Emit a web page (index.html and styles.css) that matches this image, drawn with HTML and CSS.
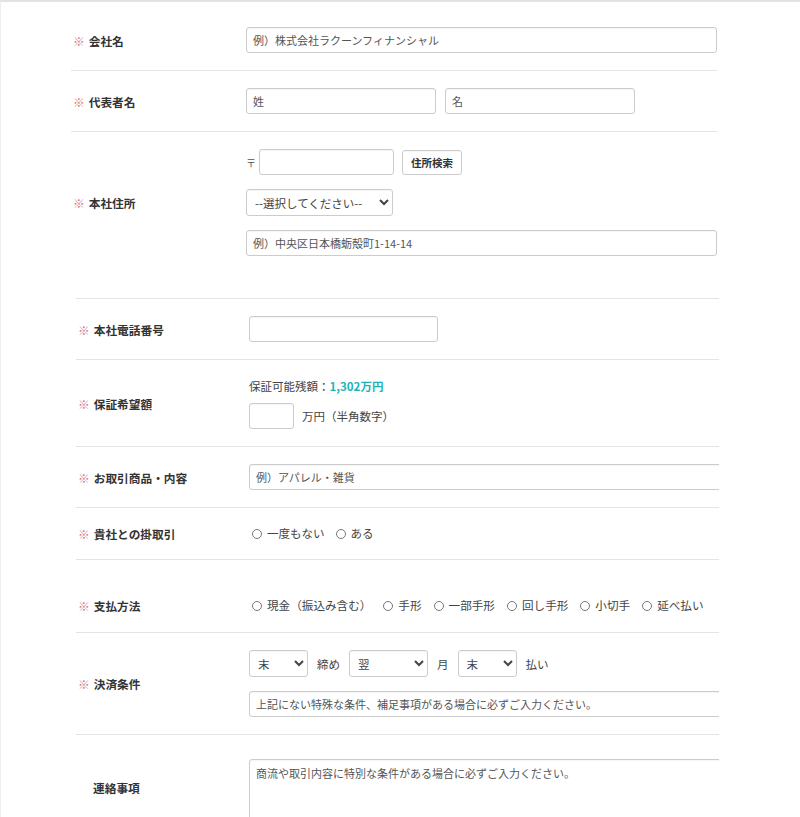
FILE: index.html
```html
<!DOCTYPE html>
<html lang="ja">
<head>
  <meta charset="UTF-8" />
  <meta name="viewport" content="width=device-width, initial-scale=1.0" />
  <title>お申し込みフォーム</title>
  <link rel="stylesheet" href="styles.css">
</head>
<body>
  <div class="page">

    <div class="form-block company">
      <div class="row">
        <div class="label"><span class="req">※</span>会社名</div>
        <div class="field">
          <input type="text" class="text full" placeholder="例）株式会社ラクーンフィナンシャル">
        </div>
      </div>

      <div class="row">
        <div class="label"><span class="req">※</span>代表者名</div>
        <div class="field inline">
          <input type="text" class="text name" placeholder="姓">
          <input type="text" class="text name" placeholder="名">
        </div>
      </div>

      <div class="row last">
        <div class="label"><span class="req">※</span>本社住所</div>
        <div class="field stack">
          <div class="inline zip-line">
            <span class="zip-mark">〒</span>
            <input type="text" class="text zip">
            <button type="button" class="search-btn">住所検索</button>
          </div>
          <div>
            <select class="pref">
              <option>--選択してください--</option>
            </select>
          </div>
          <input type="text" class="text full" placeholder="例）中央区日本橋蛎殻町1-14-14">
        </div>
      </div>
    </div>

    <div class="form-block detail">
      <div class="row">
        <div class="label"><span class="req">※</span>本社電話番号</div>
        <div class="field">
          <input type="text" class="text phone">
        </div>
      </div>

      <div class="row">
        <div class="label"><span class="req">※</span>保証希望額</div>
        <div class="field stack tight">
          <div class="note">保証可能残額：<strong class="amount">1,302万円</strong></div>
          <div class="inline">
            <input type="text" class="text amount-input">
            <span class="unit">万円（半角数字）</span>
          </div>
        </div>
      </div>

      <div class="row">
        <div class="label"><span class="req">※</span>お取引商品・内容</div>
        <div class="field">
          <input type="text" class="text wide" placeholder="例）アパレル・雑貨">
        </div>
      </div>

      <div class="row">
        <div class="label"><span class="req">※</span>貴社との掛取引</div>
        <div class="field radios">
          <label><input type="radio" name="history">一度もない</label>
          <label><input type="radio" name="history">ある</label>
        </div>
      </div>

      <div class="row pay">
        <div class="label"><span class="req">※</span>支払方法</div>
        <div class="field radios spaced">
          <label><input type="radio" name="method">現金（振込み含む）</label>
          <label><input type="radio" name="method">手形</label>
          <label><input type="radio" name="method">一部手形</label>
          <label><input type="radio" name="method">回し手形</label>
          <label><input type="radio" name="method">小切手</label>
          <label><input type="radio" name="method">延べ払い</label>
        </div>
      </div>

      <div class="row">
        <div class="label"><span class="req">※</span>決済条件</div>
        <div class="field stack">
          <div class="inline terms">
            <select class="short"><option>末</option></select>
            <span class="unit">締め</span>
            <select class="mid"><option>翌</option></select>
            <span class="unit">月</span>
            <select class="short"><option>末</option></select>
            <span class="unit">払い</span>
          </div>
          <input type="text" class="text wide" placeholder="上記にない特殊な条件、補足事項がある場合に必ずご入力ください。">
        </div>
      </div>

      <div class="row notes">
        <div class="label optional">連絡事項</div>
        <div class="field">
          <textarea class="memo" placeholder="商流や取引内容に特別な条件がある場合に必ずご入力ください。"></textarea>
        </div>
      </div>
    </div>

  </div>
</body>
</html>
```

FILE: styles.css
```css
body {
  margin: 0;
  padding: 0;
  background: #ffffff;
  font-family: "Noto Sans CJK JP", "Noto Sans", sans-serif;
  color: #444444;
}
.page {
  border-top: 2px solid #e2e2e2;
  border-left: 1px solid #eeeeee;
  min-height: 815px;
  padding-top: 8px;
  box-sizing: border-box;
}
.form-block.company {
  margin-left: 70px;
  width: 646px;
}
.form-block.detail {
  margin-left: 75px;
  width: 643px;
  border-top: 1px solid #e4e4e4;
  overflow: hidden;
}
.row {
  display: flex;
  align-items: center;
  padding: 17px 0;
  border-bottom: 1px solid #e4e4e4;
}
.row.last {
  border-bottom: none;
  padding-bottom: 42px;
}
.row.pay {
  padding-top: 37px;
  padding-bottom: 18px;
}
.row.notes {
  padding-top: 24px;
  align-items: flex-start;
}
.label {
  flex: 0 0 auto;
  width: 173px;
  padding-left: 2px;
  font-size: 11.7px;
  font-weight: bold;
  color: #333333;
  box-sizing: border-box;
}
.company .label {
  width: 175px;
}
.notes .label {
  padding-left: 17px;
  padding-top: 20px;
}
.req {
  color: #d47676;
  font-weight: normal;
  margin-right: 4px;
}
.field {
  flex: 1;
  min-width: 0;
  font-size: 11.5px;
}
.inline {
  display: flex;
  align-items: center;
}
.stack {
  display: flex;
  flex-direction: column;
  gap: 14px;
}
.stack.tight {
  gap: 8px;
}
.text, select, textarea, .search-btn {
  box-sizing: border-box;
  height: 26px;
  border: 1px solid #cccccc;
  border-radius: 3px;
  background: #ffffff;
  font-family: "Noto Sans CJK JP", "Noto Sans", sans-serif;
  font-size: 11px;
  color: #555555;
  box-shadow: inset 0 1px 1px rgba(0,0,0,0.04);
}
.text {
  padding: 0 6px;
  display: block;
}
.text::placeholder, textarea::placeholder {
  color: #555555;
  opacity: 1;
}
.full {
  width: 100%;
}
.wide {
  width: 520px;
}
.name {
  width: 190px;
  margin-right: 9px;
}
.zip-mark {
  font-size: 10px;
  color: #555555;
  margin-right: 3px;
}
.zip {
  width: 135px;
}
.search-btn {
  margin-left: 8px;
  width: 60px;
  height: 25px;
  padding: 0;
  font-weight: bold;
  color: #333333;
  font-size: 10.5px;
  cursor: pointer;
}
select {
  padding: 0 4px;
  font-size: 11.5px;
  color: #444444;
  height: 27px;
}
.pref {
  width: 147px;
}
.phone {
  width: 189px;
}
.note {
  color: #444444;
  line-height: 18px;
}
.amount {
  color: #1cb4b8;
}
.amount-input {
  width: 45px;
}
.unit {
  margin-left: 8px;
  color: #444444;
}
.terms .unit {
  margin: 0 9px;
}
.terms select.short {
  width: 59px;
}
.terms select.mid {
  width: 79px;
}
.radios {
  display: flex;
  align-items: center;
  line-height: 17px;
  color: #444444;
  padding-left: 3px;
  white-space: nowrap;
}
.radios label {
  display: flex;
  align-items: center;
  flex-shrink: 0;
  margin-right: 11px;
}
.radios.spaced label {
  margin-right: 12px;
  font-size: 11.6px;
}
.radios input {
  appearance: none;
  -webkit-appearance: none;
  flex-shrink: 0;
  width: 10px;
  height: 10px;
  margin: 0 5px 0 0;
  border: 1px solid #777777;
  border-radius: 50%;
  background: #ffffff;
}
.memo {
  width: 520px;
  height: 82px;
  padding: 5px 6px;
  resize: vertical;
  display: block;
  line-height: 16px;
}
```
